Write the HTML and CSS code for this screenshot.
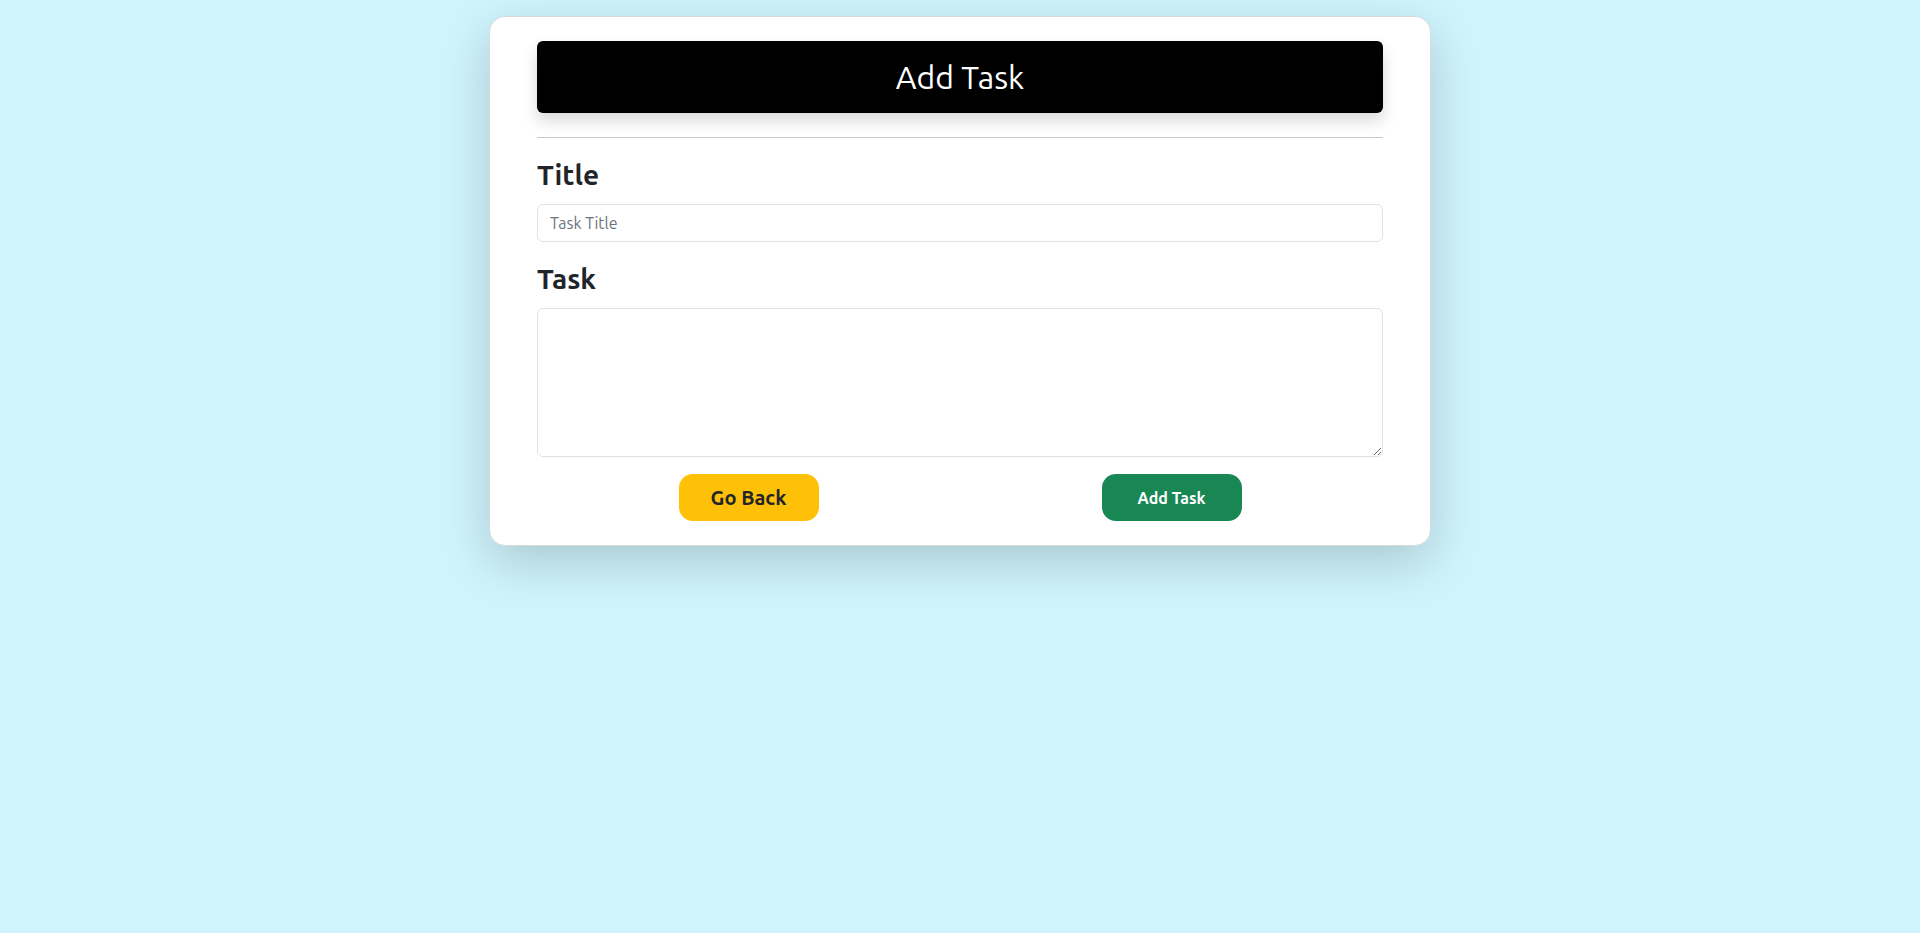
FILE: index.html
```html
<!DOCTYPE html>
<html lang="en">
<head>
<meta charset="utf-8">
<title>Add Task</title>
<link rel="stylesheet" href="styles.css">
</head>
<body>
<main class="card">
  <header class="card-head">Add Task</header>
  <hr class="divider">
  <form class="task-form">
    <label class="field-label" for="title">Title</label>
    <input class="field-input" id="title" type="text" placeholder="Task Title">
    <label class="field-label" for="task">Task</label>
    <textarea class="field-area" id="task"></textarea>
    <div class="actions">
      <div class="action-col"><button type="button" class="btn btn-back">Go Back</button></div>
      <div class="action-col"><button type="submit" class="btn btn-add">Add Task</button></div>
    </div>
  </form>
</main>
</body>
</html>
```

FILE: styles.css
```css
* { box-sizing: border-box; }

html, body {
  margin: 0;
  padding: 0;
}

body {
  background: #cff4fc;
  font-family: "Ubuntu", "Noto Sans", "Liberation Sans", sans-serif;
  color: #212529;
  min-height: 933px;
  padding-top: 16px;
}

.card {
  width: 942px;
  margin: 0 auto;
  background: #fff;
  border: 1px solid #d6dadd;
  border-radius: 16px;
  box-shadow: 0 16px 48px rgba(0, 0, 0, 0.175);
  padding: 24px 47px 24px;
}

.card-head {
  height: 72px;
  background: #000;
  color: #fff;
  border-radius: 6px;
  box-shadow: 0 8px 16px rgba(0, 0, 0, 0.15);
  display: flex;
  align-items: center;
  justify-content: center;
  font-size: 32px;
  font-weight: 400;
  line-height: 1.2;
}

.divider {
  margin: 24px 0 0;
  border: 0;
  border-top: 1px solid #c8c8c8;
}

.task-form {
  display: flex;
  flex-direction: column;
}

.field-label {
  display: block;
  font-size: 28px;
  font-weight: 700;
  line-height: 34px;
  margin: 20px 0 12px;
  color: #212529;
}

.field-input {
  height: 38px;
  border: 1px solid #dee2e6;
  border-radius: 6px;
  padding: 6px 12px;
  font-family: inherit;
  font-size: 16px;
  color: #212529;
  background: #fff;
}

.field-input::placeholder {
  color: #6c757d;
}

.field-area {
  height: 149px;
  border: 1px solid #dee2e6;
  border-radius: 6px;
  padding: 6px 12px;
  font-family: inherit;
  font-size: 16px;
  resize: vertical;
  background: #fff;
}

.actions {
  display: flex;
  margin-top: 17px;
}

.action-col {
  flex: 1;
  display: flex;
  justify-content: center;
}

.btn {
  width: 140px;
  height: 47px;
  border: 0;
  border-radius: 14px;
  font-family: inherit;
  font-weight: 700;
  cursor: pointer;
}

.btn-back {
  background: #ffc107;
  color: #212529;
  font-size: 20px;
}

.btn-add {
  background: #198754;
  color: #fff;
  font-size: 16px;
}
```
